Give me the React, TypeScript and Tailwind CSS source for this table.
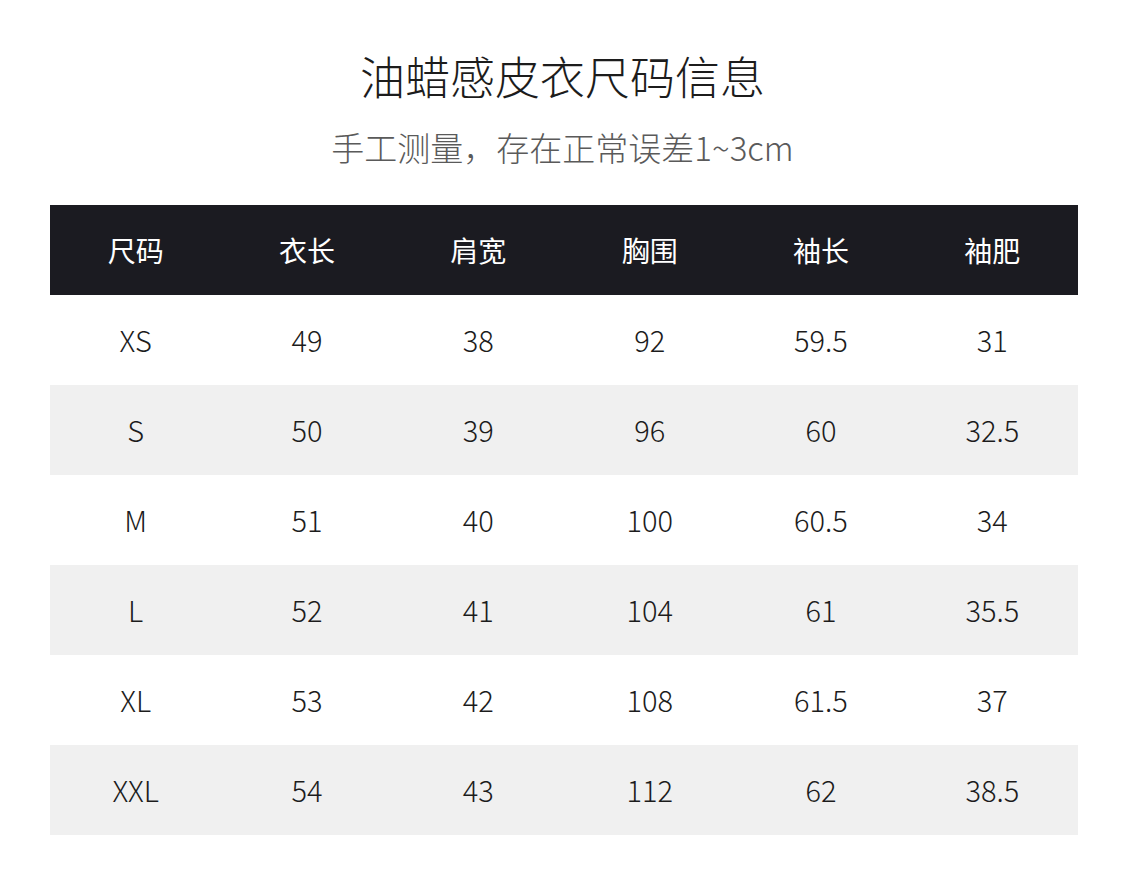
const headers = ['尺码', '衣长', '肩宽', '胸围', '袖长', '袖肥'];

const rows = [
  ['XS', '49', '38', '92', '59.5', '31'],
  ['S', '50', '39', '96', '60', '32.5'],
  ['M', '51', '40', '100', '60.5', '34'],
  ['L', '52', '41', '104', '61', '35.5'],
  ['XL', '53', '42', '108', '61.5', '37'],
  ['XXL', '54', '43', '112', '62', '38.5'],
];

export default function App() {
  return (
    <div
      className="w-[1125px] h-[882px] bg-white text-[#1c1c1c] pt-[48px]"
      style={{ fontFamily: '"Noto Sans CJK SC", "Noto Sans", sans-serif' }}
    >
      <h1 className="text-center text-[45px] leading-[56px] font-light">油蜡感皮衣尺码信息</h1>
      <p className="text-center text-[33px] leading-[40px] font-light text-[#5a5a5a] mt-[23px]">
        手工测量，存在正常误差1~3cm
      </p>

      <div className="mx-[50px] mt-[38px] w-[1028px]">
        <div className="grid grid-cols-6 h-[90px] bg-[#1b1b21] text-white text-[28px]">
          {headers.map((h) => (
            <div key={h} className="flex items-center justify-center">
              {h}
            </div>
          ))}
        </div>
        {rows.map((r, i) => (
          <div
            key={r[0]}
            className={`grid grid-cols-6 h-[90px] text-[29px] font-light ${i % 2 === 1 ? 'bg-[#f0f0f0]' : 'bg-white'}`}
          >
            {r.map((c, j) => (
              <div key={j} className="flex items-center justify-center">
                {c}
              </div>
            ))}
          </div>
        ))}
      </div>
    </div>
  );
}
